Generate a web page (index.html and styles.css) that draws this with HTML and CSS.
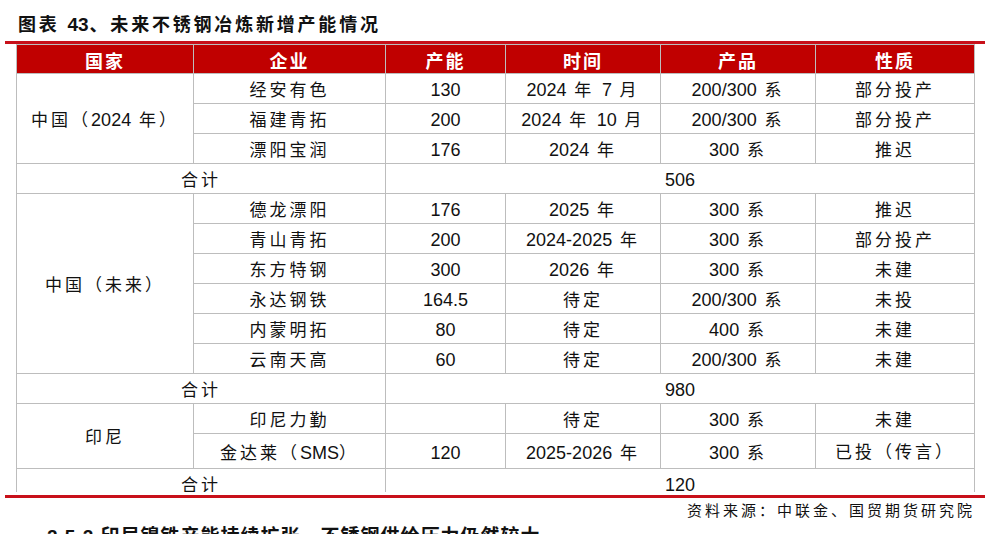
FILE: index.html
```html
<!DOCTYPE html>
<html lang="zh-CN">
<head>
<meta charset="utf-8">
<title>未来不锈钢冶炼新增产能情况</title>
<link rel="stylesheet" href="styles.css">
</head>
<body>
<div class="page">
  <div class="title">图表 <span class="tn">43</span>、未来不锈钢冶炼新增产能情况</div>
  <div class="rule"></div>
  <div class="table-wrap">
    <table class="cap">
      <colgroup>
        <col class="c1"><col class="c2"><col class="c3"><col class="c4"><col class="c5"><col class="c6">
      </colgroup>
      <thead>
        <tr class="hd">
          <th>国家</th><th>企业</th><th>产能</th><th>时间</th><th>产品</th><th>性质</th>
        </tr>
      </thead>
      <tbody>
        <tr>
          <td rowspan="3">中国（<span class="n">2024</span> 年）</td>
          <td>经安有色</td><td class="num">130</td><td><span class="n">2024</span> 年 <span class="n">7</span> 月</td><td><span class="n">200/300</span> 系</td><td>部分投产</td>
        </tr>
        <tr>
          <td>福建青拓</td><td class="num">200</td><td><span class="n">2024</span> 年 <span class="n">10</span> 月</td><td><span class="n">200/300</span> 系</td><td>部分投产</td>
        </tr>
        <tr>
          <td>漂阳宝润</td><td class="num">176</td><td><span class="n">2024</span> 年</td><td><span class="n">300</span> 系</td><td>推迟</td>
        </tr>
        <tr>
          <td colspan="2">合计</td><td colspan="4" class="num">506</td>
        </tr>
        <tr>
          <td rowspan="6">中国（未来）</td>
          <td>德龙漂阳</td><td class="num">176</td><td><span class="n">2025</span> 年</td><td><span class="n">300</span> 系</td><td>推迟</td>
        </tr>
        <tr>
          <td>青山青拓</td><td class="num">200</td><td><span class="n">2024-2025</span> 年</td><td><span class="n">300</span> 系</td><td>部分投产</td>
        </tr>
        <tr>
          <td>东方特钢</td><td class="num">300</td><td><span class="n">2026</span> 年</td><td><span class="n">300</span> 系</td><td>未建</td>
        </tr>
        <tr>
          <td>永达钢铁</td><td class="num">164.5</td><td>待定</td><td><span class="n">200/300</span> 系</td><td>未投</td>
        </tr>
        <tr>
          <td>内蒙明拓</td><td class="num">80</td><td>待定</td><td><span class="n">400</span> 系</td><td>未建</td>
        </tr>
        <tr>
          <td>云南天高</td><td class="num">60</td><td>待定</td><td><span class="n">200/300</span> 系</td><td>未建</td>
        </tr>
        <tr>
          <td colspan="2">合计</td><td colspan="4" class="num">980</td>
        </tr>
        <tr>
          <td rowspan="2">印尼</td>
          <td>印尼力勤</td><td class="num"></td><td>待定</td><td><span class="n">300</span> 系</td><td>未建</td>
        </tr>
        <tr class="tall">
          <td>金达莱（<span class="n">SMS</span>）</td><td class="num">120</td><td><span class="n">2025-2026</span> 年</td><td><span class="n">300</span> 系</td><td>已投（传言）</td>
        </tr>
        <tr>
          <td colspan="2">合计</td><td colspan="4" class="num">120</td>
        </tr>
      </tbody>
    </table>
  </div>
  <div class="rule"></div>
  <div class="source">资料来源：中联金、国贸期货研究院</div>
  <div class="next">2.5.2 印尼镍铁产能持续扩张，不锈钢供给压力仍然较大</div>
</div>
</body>
</html>
```

FILE: styles.css
```css
html, body {
  margin: 0;
  padding: 0;
  background: #ffffff;
  overflow: hidden;
}

.page {
  width: 991px;
  height: 534px;
  overflow: hidden;
  font-family: "Liberation Sans", "Noto Sans CJK SC", sans-serif;
  color: #111111;
}

.title {
  margin: 12px 0 0 18px;
  height: 26px;
  line-height: 26px;
  font-size: 18px;
  font-weight: 700;
  letter-spacing: 2.8px;
  color: #111111;
  white-space: nowrap;
}

.title .tn {
  font-size: 19px;
  letter-spacing: 0;
  margin-right: 1px;
}

.rule {
  margin: 3px 6px 0 5px;
  height: 3px;
  background: #c8101a;
}

.table-wrap {
  height: 448px;
  overflow: hidden;
}

.cap {
  margin-left: 16px;
  width: 958px;
  table-layout: fixed;
  border-collapse: collapse;
}

.c1 { width: 177px; }
.c2 { width: 192px; }
.c3 { width: 120px; }
.c4 { width: 155px; }
.c5 { width: 155px; }
.c6 { width: 159px; }

.cap th,
.cap td {
  border: 1px solid #bdbdbd;
  padding: 0;
  text-align: center;
  vertical-align: middle;
  white-space: nowrap;
  overflow: hidden;
}

.cap th {
  background: #c00000;
  color: #ffffff;
  font-size: 18px;
  font-weight: 700;
  letter-spacing: 2px;
  padding-top: 1px;
}

.hd {
  height: 29px;
}

.cap td {
  font-size: 17px;
  font-weight: 400;
  line-height: 22px;
  letter-spacing: 3px;
  color: #111111;
  padding-top: 4px;
}

.cap tbody tr {
  height: 30px;
}

.cap tbody tr.tall {
  height: 35px;
}

.cap td.num,
.cap .n {
  font-size: 18px;
  letter-spacing: 0;
}

.cap td.num {
  padding-top: 3px;
}

.source {
  margin-top: 2px;
  height: 22px;
  line-height: 22px;
  padding-right: 16px;
  text-align: right;
  font-size: 15px;
  letter-spacing: 3px;
  color: #111111;
}

.next {
  margin: 1px 0 0 47px;
  line-height: 28px;
  font-size: 19px;
  font-weight: 700;
  letter-spacing: 1px;
  white-space: nowrap;
}
```
